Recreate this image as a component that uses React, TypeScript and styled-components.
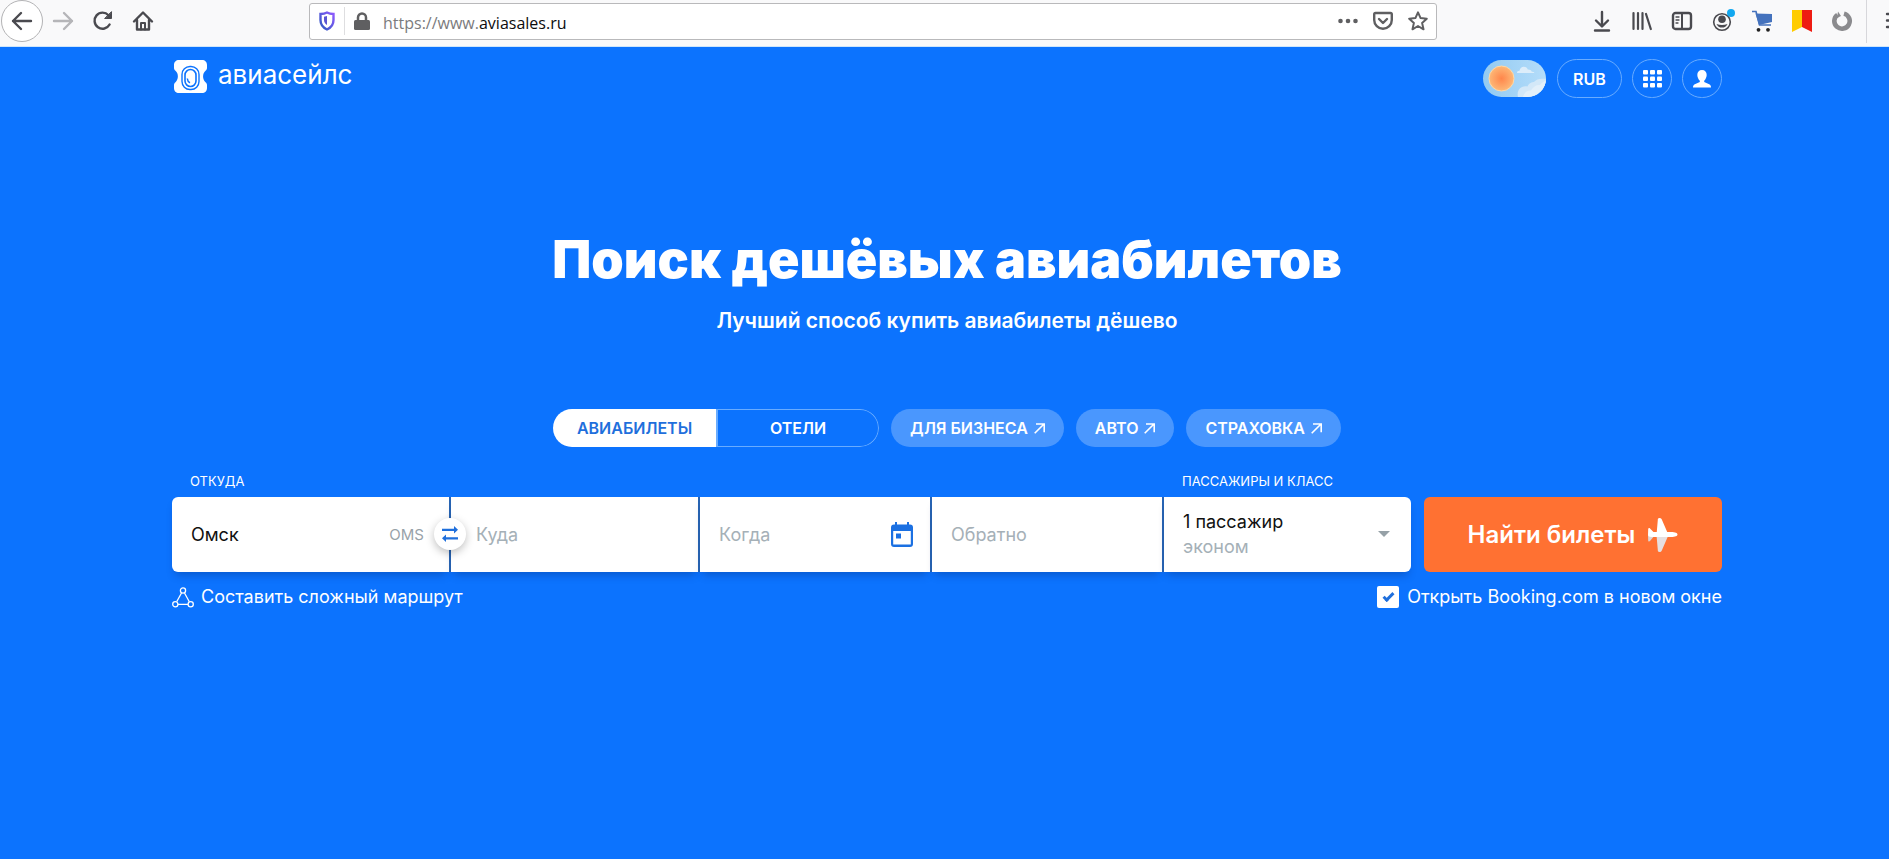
import React, { useState } from "react";
import styled, { createGlobalStyle, css } from "styled-components";

const blue = "#0c73fe";

const GlobalStyle = createGlobalStyle`
  *, *::before, *::after { box-sizing: border-box; }
  body {
    margin: 0;
    background: ${blue};
    font-family: Inter, "Liberation Sans", sans-serif;
    overflow-x: hidden;
  }
  button, input { font-family: inherit; }
  button { cursor: pointer; }
  svg { display: block; flex: none; }
`;

/* ---------- browser bar ---------- */

const BrowserBar = styled.header`
  display: flex;
  align-items: center;
  height: 47px;
  padding: 0 0 4px 1px;
  background: #f9f9fa;
  border-bottom: 1px solid #cfe6fb;
  overflow: hidden;
`;

const BarGroup = styled.div`
  display: flex;
  align-items: center;
  flex: none;
`;

const BarButton = styled.button<{ $round?: boolean }>`
  display: grid;
  place-items: center;
  flex: none;
  width: 40px;
  height: 40px;
  padding: 0;
  border: 0;
  background: none;
  color: #4a4a4f;
  ${(p) =>
    p.$round &&
    css`
      width: 42px;
      height: 42px;
      border: 1px solid #b3b3b5;
      border-radius: 50%;
      background: #fff;
    `}
`;

const AddressBar = styled.div`
  display: flex;
  align-items: center;
  flex: 1;
  min-width: 0;
  height: 37px;
  margin-left: 146px;
  padding: 0 1px 0 9px;
  border: 1px solid #b9b9bb;
  border-radius: 3px;
  background: #fff;
  color: #5f5f61;
`;

const AddressDivider = styled.span`
  width: 1px;
  height: 28px;
  margin: 0 9px;
  background: #dedee0;
`;

const Address = styled.p`
  flex: 1;
  min-width: 0;
  margin: 0 0 0 13px;
  padding-top: 3px;
  overflow: hidden;
  white-space: nowrap;
  font: 16px/24px "Open Sans", "Noto Sans", sans-serif;
  color: #7b7b7d;
  strong {
    font-weight: 400;
    color: #0c0c0d;
  }
`;

const AddressActions = styled.div`
  display: flex;
  align-items: center;
  gap: 15px;
  padding-right: 7px;
`;

const AddressAction = styled.button`
  display: grid;
  place-items: center;
  width: 20px;
  height: 24px;
  padding: 0;
  border: 0;
  background: none;
  color: #5f5f61;
`;

const Extensions = styled(BarGroup)`
  margin-left: 145px;
`;

const MenuButton = styled(BarButton)`
  width: 23px;
  height: 43px;
  margin-left: 4px;
  padding-left: 18px;
  border-left: 1px solid #d7d7db;
  justify-items: start;
`;

/* ---------- site header ---------- */

const Page = styled.div`
  padding: 12px 167px 40px 172px;
  color: #fff;
`;

const SiteHeader = styled.div`
  display: flex;
  align-items: center;
  justify-content: space-between;
`;

const Logo = styled.a`
  display: flex;
  align-items: center;
  gap: 11px;
  padding-left: 2px;
  margin-bottom: 4px;
  color: #fff;
  font-size: 26px;
  line-height: 28px;
  text-decoration: none;
`;

const LogoText = styled.span`
  padding-bottom: 4px;
`;

const HeaderTools = styled.div`
  display: flex;
  align-items: center;
  gap: 10px;
`;

const Pill = styled.button<{ $wide?: boolean }>`
  display: grid;
  place-items: center;
  width: ${(p) => (p.$wide ? 65 : 40)}px;
  height: 39px;
  padding: 0;
  border: 1px solid #69acff;
  border-radius: 20px;
  background: none;
  color: #fff;
  font-size: 16px;
  line-height: 20px;
  font-weight: 600;
`;

const ThemeSwitch = styled.button`
  width: 63px;
  height: 37px;
  margin-right: 1px;
  padding: 0;
  border: 0;
  border-radius: 19px;
  background: linear-gradient(90deg, #93caf2, #b4ddfa);
  overflow: hidden;
`;

/* ---------- hero ---------- */

const Hero = styled.section`
  padding-top: 130px;
  text-align: center;
`;

const Title = styled.h1`
  margin: 0;
  font-size: 52px;
  line-height: 64px;
  font-weight: 900;
`;

const Subtitle = styled.p`
  margin: 17px 0 0;
  font-size: 21px;
  line-height: 24px;
  font-weight: 600;
`;

const Services = styled.nav`
  display: flex;
  justify-content: center;
  gap: 12px;
  margin-top: 76px;
`;

const Switcher = styled.div`
  display: flex;
  border-radius: 19px;
  overflow: hidden;
`;

const Tab = styled.button<{ $active?: boolean }>`
  width: 163px;
  height: 38px;
  padding: 0;
  font-size: 16px;
  line-height: 20px;
  font-weight: 600;
  ${(p) =>
    p.$active
      ? css`
          border: 0;
          background: #fff;
          color: #1f6fdc;
        `
      : css`
          border: 1px solid #69acff;
          border-left-width: 2px;
          border-radius: 0 19px 19px 0;
          background: none;
          color: #fff;
        `}
`;

const ServiceLink = styled.a`
  display: flex;
  align-items: center;
  gap: 6px;
  height: 38px;
  padding: 0 19px;
  border-radius: 19px;
  background: #4a97fe;
  color: #fff;
  font-size: 16px;
  line-height: 20px;
  font-weight: 600;
  text-decoration: none;
`;

/* ---------- search form ---------- */

const Search = styled.form`
  display: flex;
  align-items: flex-end;
  gap: 13px;
  margin-top: 26px;
`;

const Fields = styled.div`
  display: grid;
  grid-template-columns: 277fr 247fr 230fr 230fr 247fr;
  gap: 2px;
  flex: 1;
  min-width: 0;
`;

const Field = styled.div`
  display: flex;
  flex-direction: column;
  justify-content: flex-end;
  gap: 8px;
  min-width: 0;
`;

const Label = styled.label`
  padding-left: 18px;
  font-size: 13px;
  line-height: 16px;
`;

const Box = styled.div<{ $edge?: "start" | "end"; $indent?: boolean }>`
  position: relative;
  display: flex;
  align-items: center;
  height: 75px;
  padding: 0 17px 0 ${(p) => (p.$indent ? 25 : 19)}px;
  background: #fff;
  box-shadow: ${(p) => (p.$edge === "end" ? "" : "2px 0 #2865b4, ")}0 6px 8px -3px rgba(0, 30, 90, 0.3);
  border-radius: ${(p) => (p.$edge === "start" ? "6px 0 0 6px" : p.$edge === "end" ? "0 6px 6px 0" : "0")};
`;

const TextInput = styled.input`
  flex: 1;
  min-width: 0;
  width: 100%;
  height: 100%;
  padding: 0;
  border: 0;
  outline: 0;
  background: none;
  color: #111;
  font-size: 18px;
  &::placeholder {
    color: #a5b0b7;
    opacity: 1;
  }
`;

const AirportCode = styled.span`
  margin-right: 8px;
  color: #98a2a9;
  font-size: 15px;
  line-height: 24px;
`;

const SwapButton = styled.button`
  position: absolute;
  top: 21px;
  right: -17px;
  z-index: 1;
  display: grid;
  place-items: center;
  width: 32px;
  height: 32px;
  padding: 0;
  border: 0;
  border-radius: 50%;
  background: #fff;
  box-shadow: 0 3px 8px rgba(0, 0, 0, 0.25);
`;

const Passengers = styled.button`
  display: flex;
  align-items: center;
  justify-content: space-between;
  width: 100%;
  height: 100%;
  padding: 0 4px 2px 0;
  border: 0;
  background: none;
  color: #111;
  font-size: 18px;
  line-height: 25px;
  text-align: left;
`;

const CabinClass = styled.span`
  display: block;
  color: #a5b0b7;
`;

const Submit = styled.button`
  display: flex;
  align-items: center;
  justify-content: center;
  gap: 12px;
  flex: none;
  width: 298px;
  height: 75px;
  padding: 0;
  border: 0;
  border-radius: 6px;
  background: #ff7132;
  color: #fff;
  font-size: 24px;
  line-height: 28px;
  font-weight: 600;
`;

const Options = styled.div`
  display: flex;
  justify-content: space-between;
  margin-top: 13px;
  font-size: 18px;
  line-height: 24px;
`;

const RouteLink = styled.a`
  display: flex;
  align-items: center;
  gap: 7px;
  color: #fff;
  text-decoration: none;
`;

const CheckLabel = styled.label`
  display: flex;
  align-items: center;
  gap: 8px;
`;

const Checkbox = styled.input`
  appearance: none;
  width: 22px;
  height: 22px;
  margin: 0;
  border-radius: 2px;
  background: #fff;
  display: grid;
  place-items: center;
  &:checked::before {
    content: "";
    width: 11px;
    height: 6px;
    margin-bottom: 3px;
    border: solid #1f6fdc;
    border-width: 0 0 3px 3px;
    transform: rotate(-45deg);
  }
`;

/* ---------- icons ---------- */

const line = {
  fill: "none",
  stroke: "currentColor",
  strokeWidth: 2.4,
  strokeLinecap: "round" as const,
  strokeLinejoin: "round" as const,
};

const ArrowIcon = ({ forward }: { forward?: boolean }) => (
  <svg width="22" height="22" viewBox="0 0 22 22" {...line} stroke={forward ? "#b5b5b8" : "#4a4a4f"}>
    <path d={forward ? "M2 11h18M12 3l8 8-8 8" : "M20 11H2M10 3l-8 8 8 8"} />
  </svg>
);

const ReloadIcon = () => (
  <svg width="22" height="22" viewBox="0 0 22 22" {...line}>
    <path d="M17.6 14.5A8 8 0 1 1 16.5 5.300L18 7" />
    <path d="M19.500 2v6.500H13z" fill="currentColor" strokeWidth="1" />
  </svg>
);

const HomeIcon = () => (
  <svg width="22" height="22" viewBox="0 0 22 22" {...line}>
    <path d="M2 11.500 11 2.500l9 9M5 10v9.500h12V10" />
    <path d="M9 19.500V13h4v6.500" strokeWidth="2" />
  </svg>
);

const ShieldIcon = () => (
  <svg width="16" height="20" viewBox="0 0 16 20" fill="none">
    <defs>
      <linearGradient id="shield" x1="1" y1="0" x2="0" y2="1">
        <stop offset="0" stopColor="#9059ff" />
        <stop offset="1" stopColor="#2d5ac0" />
      </linearGradient>
    </defs>
    <path d="M8 1.500c2 1 4 1.400 6.500 1.500v6c0 4-2.200 7.500-6.500 9.500C3.700 16.500 1.500 13 1.500 9V3C4 2.900 6 2.500 8 1.500z" stroke="url(#shield)" strokeWidth="2.400" />
    <path d="M8 5v9c-2-1.300-3-3-3-5V5.700z" fill="#5b55d2" />
  </svg>
);

const LockIcon = () => (
  <svg width="16" height="19" viewBox="0 0 16 19">
    <path d="M4 9V5.500a4 4 0 0 1 8 0V9" fill="none" stroke="currentColor" strokeWidth="2.500" />
    <rect y="8" width="16" height="10" rx="1.500" fill="currentColor" />
  </svg>
);

const DotsIcon = () => (
  <svg width="20" height="6" viewBox="0 0 20 6" fill="currentColor">
    <circle cx="2.500" cy="3" r="2.300" />
    <circle cx="10" cy="3" r="2.300" />
    <circle cx="17.500" cy="3" r="2.300" />
  </svg>
);

const PocketIcon = () => (
  <svg width="20" height="20" viewBox="0 0 20 20" {...line}>
    <path d="M2.500 2h15c.8 0 1.300.5 1.300 1.300V9a8.800 8.800 0 0 1-17.600 0V3.300C1.200 2.500 1.700 2 2.500 2z" />
    <path d="M6 8l4 4 4-4" />
  </svg>
);

const StarIcon = () => (
  <svg width="20" height="20" viewBox="0 0 20 20" {...line} strokeWidth={2}>
    <path d="M10 1.300l2.600 5.800 6.200.6-4.700 4.200 1.400 6.400-5.500-3.300-5.500 3.300 1.400-6.400L1.200 7.700l6.200-.6z" />
  </svg>
);

const DownloadIcon = () => (
  <svg width="20" height="22" viewBox="0 0 20 22" {...line}>
    <path d="M10 2v14M4 10.500l6 6 6-6M3 20.500h14" />
  </svg>
);

const LibraryIcon = () => (
  <svg width="20" height="20" viewBox="0 0 20 20" {...line} strokeWidth={2.2}>
    <path d="M1.500 2v16M6 2v16M10.500 2v16M14 3l4.800 15" />
  </svg>
);

const SidebarIcon = () => (
  <svg width="22" height="20" viewBox="0 0 22 20" {...line}>
    <rect x="2" y="2" width="18" height="16" rx="2.500" />
    <path d="M11 2v16" strokeWidth="2" />
    <path d="M5 6h3M5 9h3M5 12h2" strokeWidth="1.300" />
  </svg>
);

const AccountIcon = () => (
  <svg width="26" height="26" viewBox="0 0 26 26">
    <circle cx="13" cy="14" r="8.300" fill="none" stroke="currentColor" strokeWidth="1.600" />
    <circle cx="13" cy="11.300" r="3.800" fill="currentColor" />
    <path d="M7.500 16q5.500 2 11 0a6 6 0 0 1-11 0z" fill="currentColor" />
    <circle cx="22" cy="5" r="4" fill="#12a8f0" />
  </svg>
);

const CartIcon = () => (
  <svg width="22" height="22" viewBox="0 0 22 22">
    <path d="M1 1.500h4l3.500 13.500H20" fill="none" stroke="#4472bd" strokeWidth="1.600" />
    <path d="M4.500 3.500 21 4v8L8 15z" fill="#4472bd" />
    <circle cx="7.500" cy="19.800" r="1.900" fill="#222" />
    <circle cx="17" cy="19.800" r="1.900" fill="#222" />
  </svg>
);

const BookmarkIcon = () => (
  <svg width="20" height="22" viewBox="0 0 20 22">
    <path d="M0 0h10v17L0 22z" fill="#ffcc00" />
    <path d="M10 0h10v22l-10-5z" fill="#ee1c12" />
  </svg>
);

const RingIcon = () => (
  <svg width="22" height="22" viewBox="0 0 22 22">
    <path d="M6.500 4.800A7.700 7.700 0 1 0 13 3.600" fill="none" stroke="#8b8b8e" strokeWidth="4.600" />
    <path d="M7 1.500 10 6l-4 2z" fill="#8b8b8e" />
  </svg>
);

const MenuIcon = () => (
  <svg width="18" height="18" viewBox="0 0 18 18" {...line}>
    <path d="M2 2h14M2 8.500h14M2 15h14" />
  </svg>
);

const LogoMark = () => (
  <svg width="33" height="33" viewBox="0 0 33 33">
    <path
      d="M5 0h23c3 0 5 2 5 5v3c0 1.300-.6 2-1.500 2.800-3.200 2.700-3.200 8.700 0 11.400.9.800 1.500 1.500 1.500 2.800v3c0 3-2 5-5 5H5c-3 0-5-2-5-5v-3c0-1.300.6-2 1.500-2.800 3.200-2.700 3.200-8.700 0-11.400C.6 10 0 9.300 0 8V5C0 2 2 0 5 0z"
      fill="#fff"
    />
    <rect x="8" y="6.500" width="17" height="23" rx="8" fill="none" stroke={blue} strokeWidth="1.400" />
    <rect x="11" y="9.500" width="11" height="17" rx="5.500" fill="none" stroke={blue} strokeWidth="1.600" />
    <path d="M13.300 18.500c.2 2.200 1 3.500 2.700 4.200" fill="none" stroke={blue} strokeWidth="1.500" />
  </svg>
);

const SkyArt = () => (
  <svg width="63" height="37" viewBox="0 0 63 37">
    <defs>
      <radialGradient id="sun">
        <stop offset="0" stopColor="#ff864b" />
        <stop offset="1" stopColor="#fdb877" />
      </radialGradient>
    </defs>
    <path d="M34 13c0-1.500 1-2.400 2.500-2.300C37 8 39 6.500 41 6.700c2 .1 3.300 1.200 3.800 2.800 2-.1 3.500.8 4 2.300q2.200-.2 2.700 1.200z" fill="#dcedfa" />
    <path d="M35 37c-1-4 0-8 4-10 2-1 4-1 5.500-.5C46 23 49 22 51 22c2-3 7-4 12-3v18z" fill="#d3e8f8" />
    <path d="M40 37c1-4 4-7 8-6.500 2-4 6-6 9-5.500 1.500-2 4-4 6-4.500V37z" fill="#e3f0fa" />
    <circle cx="18.500" cy="18.500" r="12.500" fill="url(#sun)" stroke="#ffd8a6" />
  </svg>
);

const GridIcon = () => (
  <svg width="19" height="18" viewBox="0 0 19 18" fill="#fff">
    {[0, 7, 14].map((x) => [0, 6.5, 13].map((y) => <rect key={`${x}-${y}`} x={x} y={y} width="5" height="4.500" rx="1" />))}
  </svg>
);

const UserIcon = () => (
  <svg width="18" height="18" viewBox="0 0 18 18" fill="#fff">
    <path d="M9 0c3 0 4.800 2 4.700 5-.1 2.600-1.200 4.500-2.500 5.700v1.300l5 2.300c1.200.6 1.800 1.500 1.800 3.200H0c0-1.700.6-2.600 1.800-3.200l5-2.300v-1.300C5.500 9.500 4.400 7.600 4.300 5 4.200 2 6 0 9 0z" />
  </svg>
);

const OutIcon = () => (
  <svg width="11" height="11" viewBox="0 0 11 11" fill="none" stroke="#fff" strokeWidth="1.600">
    <path d="M.7 10.300 10 1M2 1h8.200v8.200" />
  </svg>
);

const SwapIcon = () => (
  <svg width="16" height="16" viewBox="0 0 16 16" fill="#1f6fdc">
    <path d="M0 2.700h12V0L16 3.700 12 7.500V5H0z" />
    <path d="M16 11.200H4V8.500L0 12.300 4 16v-2.500h12z" />
  </svg>
);

const CalendarIcon = () => (
  <svg width="22" height="25" viewBox="0 0 22 25">
    <path d="M3 2.500h1V0h2v2.500h10V0h2v2.500h1a3 3 0 0 1 3 3V22a3 3 0 0 1-3 3H3a3 3 0 0 1-3-3V5.500a3 3 0 0 1 3-3z" fill="#1b70e2" />
    <path d="M2.200 9h17.600v13.500H2.200z" fill="#fff" />
    <rect x="5" y="11.500" width="5" height="5" fill="#1b70e2" />
  </svg>
);

const CaretIcon = () => (
  <svg width="12" height="6" viewBox="0 0 12 6">
    <path d="M0 0h12L6 6z" fill="#96a1a7" />
  </svg>
);

const PlaneIcon = () => (
  <svg width="31" height="34" viewBox="0 0 31 34">
    <path d="M9.500 17h12l-6.700 15.500c-.5 1-1.300 1.500-2.300 1.500-1.300 0-1.800-.8-1.700-2z" fill="#e6dfe0" />
    <path d="M1 17h7l-5 6c-.7.800-1.900.500-1.800-.6z" fill="#ddd4d6" />
    <path d="M9.500 17h12L14.800 1.500C14.300.500 13.500 0 12.500 0c-1.300 0-1.800.8-1.700 2z" fill="#fff" />
    <path d="M1.200 11c0-1.100 1.100-1.400 1.800-.6L6.500 14H24c4.500 0 6.500 1 6.500 2.500S28.500 19 24 19H5c-2.600 0-4-1-4-2.300z" fill="#fff" />
  </svg>
);

const RouteIcon = () => (
  <svg width="22" height="21" viewBox="0 0 22 21" fill="none" stroke="#fff" strokeWidth="1.300">
    <circle cx="11" cy="3.500" r="2.600" />
    <circle cx="3.300" cy="17.300" r="2.600" />
    <circle cx="18.700" cy="17.300" r="2.600" />
    <path d="M9.500 6 4.700 14.700M12.500 6l4.800 8.700M6 17.300h10" />
  </svg>
);

const services = ["ДЛЯ БИЗНЕСА", "АВТО", "СТРАХОВКА"];

export default function App() {
  const [hotels, setHotels] = useState(false);
  const [newWindow, setNewWindow] = useState(true);

  return (
    <>
      <GlobalStyle />
      <BrowserBar>
        <BarGroup>
          <BarButton $round aria-label="Назад"><ArrowIcon /></BarButton>
          <BarButton aria-label="Вперёд"><ArrowIcon forward /></BarButton>
          <BarButton aria-label="Обновить"><ReloadIcon /></BarButton>
          <BarButton aria-label="Домой"><HomeIcon /></BarButton>
        </BarGroup>
        <AddressBar>
          <ShieldIcon />
          <AddressDivider />
          <LockIcon />
          <Address>https://www.<strong>aviasales.ru</strong></Address>
          <AddressActions>
            <AddressAction aria-label="Действия"><DotsIcon /></AddressAction>
            <AddressAction aria-label="Pocket"><PocketIcon /></AddressAction>
            <AddressAction aria-label="Закладка"><StarIcon /></AddressAction>
          </AddressActions>
        </AddressBar>
        <Extensions>
          <BarButton aria-label="Загрузки"><DownloadIcon /></BarButton>
          <BarButton aria-label="Библиотека"><LibraryIcon /></BarButton>
          <BarButton aria-label="Боковая панель"><SidebarIcon /></BarButton>
          <BarButton aria-label="Аккаунт"><AccountIcon /></BarButton>
          <BarButton aria-label="Покупки"><CartIcon /></BarButton>
          <BarButton aria-label="Закладки"><BookmarkIcon /></BarButton>
          <BarButton aria-label="Расширение"><RingIcon /></BarButton>
          <MenuButton aria-label="Меню"><MenuIcon /></MenuButton>
        </Extensions>
      </BrowserBar>

      <Page>
        <SiteHeader>
          <Logo href="#"><LogoMark /><LogoText>авиасейлс</LogoText></Logo>
          <HeaderTools>
            <ThemeSwitch role="switch" aria-checked="false" aria-label="Тёмная тема"><SkyArt /></ThemeSwitch>
            <Pill $wide>RUB</Pill>
            <Pill aria-label="Сервисы"><GridIcon /></Pill>
            <Pill aria-label="Профиль"><UserIcon /></Pill>
          </HeaderTools>
        </SiteHeader>

        <main>
          <Hero>
            <Title>Поиск дешёвых авиабилетов</Title>
            <Subtitle>Лучший способ купить авиабилеты дёшево</Subtitle>
            <Services>
              <Switcher>
                <Tab $active={!hotels} onClick={() => setHotels(false)}>АВИАБИЛЕТЫ</Tab>
                <Tab $active={hotels} onClick={() => setHotels(true)}>ОТЕЛИ</Tab>
              </Switcher>
              {services.map((name) => (
                <ServiceLink key={name} href="#">{name}<OutIcon /></ServiceLink>
              ))}
            </Services>
          </Hero>

          <Search onSubmit={(e) => e.preventDefault()}>
            <Fields>
              <Field>
                <Label htmlFor="from">ОТКУДА</Label>
                <Box $edge="start">
                  <TextInput id="from" defaultValue="Омск" />
                  <AirportCode>OMS</AirportCode>
                  <SwapButton type="button" aria-label="Поменять местами"><SwapIcon /></SwapButton>
                </Box>
              </Field>
              <Field>
                <Box $indent><TextInput aria-label="Куда" placeholder="Куда" /></Box>
              </Field>
              <Field>
                <Box>
                  <TextInput aria-label="Когда" placeholder="Когда" />
                  <CalendarIcon />
                </Box>
              </Field>
              <Field>
                <Box><TextInput aria-label="Обратно" placeholder="Обратно" /></Box>
              </Field>
              <Field>
                <Label htmlFor="passengers">ПАССАЖИРЫ И КЛАСС</Label>
                <Box $edge="end">
                  <Passengers type="button" id="passengers">
                    <span>1 пассажир<CabinClass>эконом</CabinClass></span>
                    <CaretIcon />
                  </Passengers>
                </Box>
              </Field>
            </Fields>
            <Submit type="submit">Найти билеты<PlaneIcon /></Submit>
          </Search>

          <Options>
            <RouteLink href="#"><RouteIcon />Составить сложный маршрут</RouteLink>
            <CheckLabel>
              <Checkbox type="checkbox" checked={newWindow} onChange={() => setNewWindow(!newWindow)} />
              Открыть Booking.com в новом окне
            </CheckLabel>
          </Options>
        </main>
      </Page>
    </>
  );
}
